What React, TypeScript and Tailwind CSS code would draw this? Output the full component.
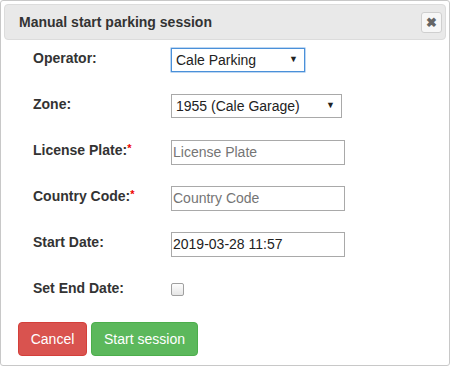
const font = { fontFamily: '"Liberation Sans", Arial, sans-serif' };

const Label = ({ text, required }: { text: string; required?: boolean }) => (
  <div className="w-[138px] shrink-0 mt-[9px] text-[14px] leading-[18px] font-bold text-[#333]">
    {text}
    {required && <span className="text-[#e00] text-[11px] align-top relative -top-[2px]">*</span>}
  </div>
);

const Select = ({ value, width, focused }: { value: string; width: string; focused?: boolean }) => (
  <div
    className={`mt-[8px] h-[24px] flex items-center justify-between pl-[4px] pr-[6px] bg-white text-[14px] text-[#222] border ${
      focused ? 'border-[#4a90d9] shadow-[0_0_0_0.5px_#7fb0e6]' : 'border-[#a9a9a9]'
    } ${width}`}
  >
    <span>{value}</span>
    <span className="text-[9px] text-[#222]">▼</span>
  </div>
);

const TextInput = ({ value, placeholder }: { value?: string; placeholder?: string }) => (
  <div className="mt-[8px] w-[174px] h-[25px] flex items-center px-[1px] bg-white border border-[#a9a9a9] text-[14px]">
    {value ? <span className="text-[#222]">{value}</span> : <span className="text-[#757575]">{placeholder}</span>}
  </div>
);

export default function App() {
  return (
    <div className="w-[450px] h-[367px] bg-white" style={font}>
      <div className="w-[450px] h-[366px] border border-[#c8c8c8] rounded-[3px] p-[3px]">
        <div className="h-[36px] flex items-center justify-between bg-[#e9e9e9] border border-[#dcdcdc] rounded-[4px] pl-[14px] pr-[3px]">
          <span className="text-[14px] font-bold text-[#333]">Manual start parking session</span>
          <button className="w-[21px] h-[21px] flex items-center justify-center bg-[#f7f7f7] border border-[#cfcfcf] rounded-[3px] text-[#666] text-[13px] font-bold leading-none">
            ✖
          </button>
        </div>

        <div className="pl-[29px]">
          <div className="flex h-[46px] items-start">
            <Label text="Operator:" />
            <Select value="Cale Parking" width="w-[134px]" focused />
          </div>
          <div className="flex h-[46px] items-start">
            <Label text="Zone:" />
            <Select value="1955 (Cale Garage)" width="w-[171px]" />
          </div>
          <div className="flex h-[46px] items-start">
            <Label text="License Plate:" required />
            <TextInput placeholder="License Plate" />
          </div>
          <div className="flex h-[46px] items-start">
            <Label text="Country Code:" required />
            <TextInput placeholder="Country Code" />
          </div>
          <div className="flex h-[46px] items-start">
            <Label text="Start Date:" />
            <TextInput value="2019-03-28 11:57" />
          </div>
          <div className="flex h-[46px] items-start">
            <Label text="Set End Date:" />
            <div className="mt-[13px] w-[13px] h-[13px] rounded-[2px] border border-[#a0a0a0] bg-gradient-to-b from-[#fdfdfd] to-[#e6e6e6]" />
          </div>
        </div>

        <div className="flex gap-[4px] pl-[14px] mt-[6px]">
          <button className="h-[34px] w-[69px] rounded-[4px] bg-[#d9534f] border border-[#d43f3a] text-white text-[14px]">
            Cancel
          </button>
          <button className="h-[34px] w-[107px] rounded-[4px] bg-[#5cb85c] border border-[#4cae4c] text-white text-[14px]">
            Start session
          </button>
        </div>
      </div>
    </div>
  );
}
